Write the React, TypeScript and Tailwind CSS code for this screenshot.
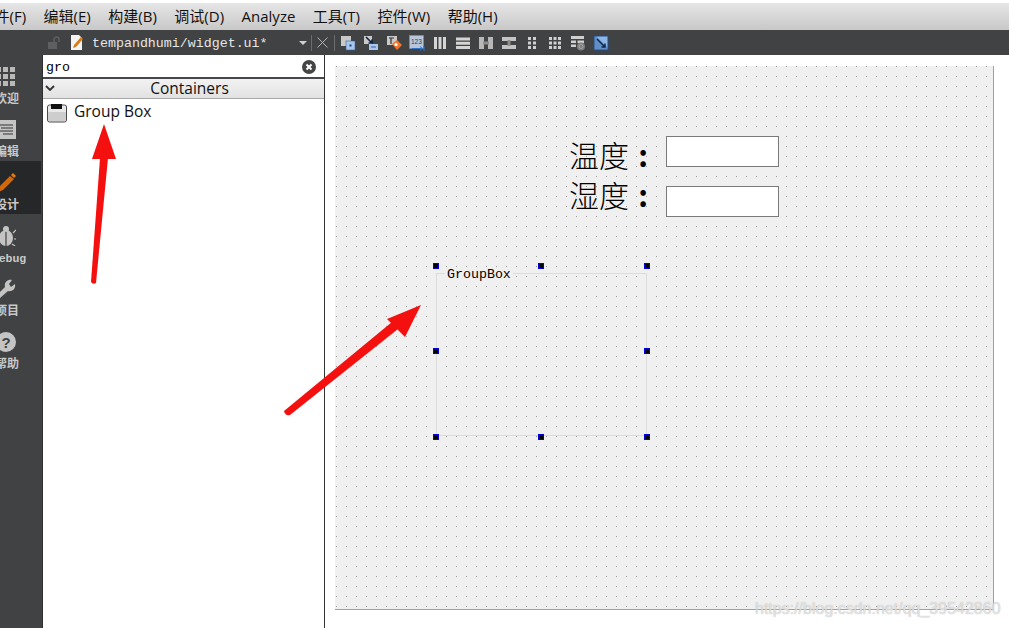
import type { ReactNode } from 'react'

const menus = ['文件(F)', '编辑(E)', '构建(B)', '调试(D)', 'Analyze', '工具(T)', '控件(W)', '帮助(H)']

const handles = [
  'left-[98px] top-[197px]',
  'left-[203px] top-[197px]',
  'left-[309px] top-[197px]',
  'left-[98px] top-[282px]',
  'left-[309px] top-[282px]',
  'left-[98px] top-[368px]',
  'left-[203px] top-[368px]',
  'left-[309px] top-[368px]',
]

function Tool({ children }: { children: ReactNode }) {
  return (
    <svg width="16" height="16" viewBox="0 0 16 16" className="shrink-0">
      {children}
    </svg>
  )
}

// designer toolbar, left to right
const tools: ReactNode[] = [
  <>
    <rect x="1" y="1" width="10" height="10" fill="#c9c9c9" />
    <rect x="6" y="6" width="9" height="9" fill="#a9c6ee" stroke="#3a5f9a" strokeWidth="0.6" />
    <rect x="9.5" y="9.5" width="2" height="2" fill="#1c3f7a" />
  </>,
  <>
    <rect x="1" y="1" width="8" height="8" fill="#c9c9c9" />
    <rect x="6" y="9" width="9" height="6" fill="#a9c6ee" />
    <path d="M3 2l6 6M9 4.500V8H5.500" stroke="#10223f" strokeWidth="1.600" fill="none" />
    <rect x="8" y="11.500" width="5" height="1" fill="#3a5f9a" />
  </>,
  <>
    <rect x="1" y="1" width="10" height="9" fill="#c9c9c9" />
    <path d="M3 3h5M5 3v6" stroke="#333" strokeWidth="1.200" />
    <path d="M6 9l5-4 5 5-5 5z" fill="#f0782c" />
    <circle cx="10" cy="9.500" r="1.600" fill="#fff" />
  </>,
  <>
    <rect x="0.500" y="0.500" width="14" height="13" fill="#b9c6da" stroke="#7b8fb0" strokeWidth="0.6" />
    <text x="2" y="9" fontSize="6.500" fontFamily="Liberation Sans" fill="#1f3f78">123</text>
    <path d="M3 13.500h10M11 11.500l2.500 2-2.500 2M15 11v5" stroke="#2f74c0" strokeWidth="1" fill="none" />
  </>,
  <path d="M2 2h3v12H2zM6.500 2h3v12h-3zM11 2h3v12h-3z" fill="#d4d4d4" />,
  <path d="M1 2.500h14v3H1zM1 6.800h14v3H1zM1 11h14v3H1z" fill="#d4d4d4" />,
  <>
    <path d="M1 2h5v12H1zM10 2h5v12h-5z" fill="#b8b8b8" />
    <path d="M5 8h6" stroke="#8e8e8e" strokeWidth="3" />
  </>,
  <>
    <path d="M1 2h14v4H1zM1 10h14v4H1z" fill="#c4c4c4" />
    <path d="M8 5v6" stroke="#8e8e8e" strokeWidth="3" />
  </>,
  <path d="M4 2h3v3H4zM9 2h3v3H9zM4 6.500h3v3H4zM9 6.500h3v3H9zM4 11h3v3H4zM9 11h3v3H9z" fill="#d0d0d0" />,
  <path d="M2 2h3v3H2zM6.500 2h3v3h-3zM11 2h3v3h-3zM2 6.500h3v3H2zM6.500 6.500h3v3h-3zM11 6.500h3v3h-3zM2 11h3v3H2zM6.500 11h3v3h-3zM11 11h3v3h-3z" fill="#d0d0d0" />,
  <>
    <path d="M1 1h13v3H1zM1 5.500h5v2.500H1zM7.500 5.500h6.500v2.500H7.500zM1 9.500h5V12H1z" fill="#cfcfcf" />
    <circle cx="11" cy="11.500" r="4" fill="#7d7d7d" />
    <circle cx="11" cy="11.500" r="2" fill="none" stroke="#a8a8a8" />
  </>,
  <>
    <rect x="1" y="1" width="14" height="14" fill="#8fb5e3" stroke="#1f4c86" />
    <path d="M3 1l12 12v2H1V1z" fill="#2b5f9e" opacity="0.45" />
    <path d="M4 4l8 8M12 8.500V12H8.500" stroke="#0b2a50" strokeWidth="1.500" fill="none" />
  </>,
]

function MenuBar() {
  return (
    <div className="h-[30px] shrink-0 pt-[3px] bg-white">
      <div className="h-[27px] flex items-center gap-[17.5px] -ml-[20.5px] bg-gradient-to-b from-[#e6e6e6] to-[#c8c8c8] text-[15px] text-[#111] [font-family:'Open_Sans','Noto_Sans_CJK_SC',sans-serif]">
        {menus.map((m) => (
          <span key={m} className="whitespace-nowrap">{m}</span>
        ))}
      </div>
    </div>
  )
}

function Toolbar() {
  return (
    <div className="h-[25px] shrink-0 flex items-center bg-[#404244]">
      <div className="w-[48px] shrink-0" />
      <svg width="13" height="14" viewBox="0 0 13 14" className="shrink-0">
        <rect x="0" y="6" width="9" height="7" fill="#5d5f61" />
        <path d="M6 6V3.500a2.500 2.500 0 0 1 5 0V6" stroke="#5d5f61" strokeWidth="1.500" fill="none" />
      </svg>
      <svg width="16" height="17" viewBox="0 0 16 17" className="ml-[8px] shrink-0">
        <path d="M2 1h8l3 3v12H2z" fill="#f4f4f4" />
        <path d="M4 14l1-3 7-8 2 2-7 8z" fill="#d97a16" />
      </svg>
      <span className="ml-[7px] pt-[3px] w-[207px] text-[13.300px] text-[#e6e6e6] whitespace-nowrap [font-family:'Liberation_Mono',monospace]">
        tempandhumi/widget.ui*
      </span>
      <div className="w-0 h-0 border-x-[4px] border-x-transparent border-t-[4px] border-t-[#d0d0d0]" />
      <div className="ml-[4px] w-px h-[16px] bg-[#6a6c6e]" />
      <svg width="11" height="11" viewBox="0 0 11 11" className="ml-[5px]">
        <path d="M0.500 0.500l10 10M10.500 0.500l-10 10" stroke="#b4b4b4" strokeWidth="1" />
      </svg>
      <div className="ml-[6px] w-px h-[16px] bg-[#6a6c6e]" />
      <div className="ml-[5px] flex items-center gap-[7px]">
        {tools.map((t, i) => (
          <Tool key={i}>{t}</Tool>
        ))}
      </div>
    </div>
  )
}

function NavItem({ label, active, mono, children }: { label: string; active?: boolean; mono?: boolean; children: ReactNode }) {
  return (
    <div className={`h-[53px] w-[70px] flex flex-col items-center pt-[11px] ${active ? 'bg-[#262729]' : ''}`}>
      <div className="h-[21px] flex items-center justify-center">{children}</div>
      <span
        className={`leading-[16px] font-bold text-[#c9c9c9] whitespace-nowrap ${
          mono
            ? "mt-[5px] ml-[6px] text-[11.500px] [font-family:'Liberation_Mono',monospace]"
            : "mt-[3px] ml-[2px] text-[12px] [font-family:'Noto_Sans_CJK_SC',sans-serif]"
        }`}
      >
        {label}
      </span>
    </div>
  )
}

function Sidebar() {
  return (
    <aside className="w-[43px] shrink-0 bg-[#404244] overflow-hidden border-r border-[#2e2f30]">
      <div className="-ml-[29px] w-[72px]">
        <NavItem label="欢迎">
          <svg width="20" height="20" viewBox="0 0 20 20">
            <path d="M0 0h5v5H0zM7 0h5v5H7zM14 0h5v5h-5zM0 7h5v5H0zM7 7h5v5H7zM14 7h5v5h-5zM0 14h5v5H0zM7 14h5v5H7zM14 14h5v5h-5z" fill="#b8b8b8" />
          </svg>
        </NavItem>
        <NavItem label="编辑">
          <svg width="20" height="19" viewBox="0 0 20 19">
            <rect x="0" y="0" width="20" height="19" fill="#c4c4c4" />
            <path d="M3 5h14M5 8h12M3 11h14M7 14h10" stroke="#333" strokeWidth="1.200" />
          </svg>
        </NavItem>
        <NavItem label="设计" active>
          <svg width="20" height="20" viewBox="0 0 20 20">
            <path d="M2 19l1-5L14 3l4 3L7 17z" fill="#d3680a" />
            <path d="M15 2l2-2 3 3-2 2z" fill="#e07a14" />
          </svg>
        </NavItem>
        <NavItem label="Debug" mono>
          <svg width="20" height="20" viewBox="0 0 20 20">
            <ellipse cx="10" cy="12" rx="7" ry="8" fill="#c4c4c4" />
            <path d="M10 4v16" stroke="#404244" strokeWidth="1.200" />
            <circle cx="10" cy="3" r="3" fill="#c4c4c4" />
            <path d="M3 7L0 4M17 7l3-3M2 13H0M18 13h2M4 18l-3 2M16 18l3 2" stroke="#c4c4c4" strokeWidth="1.200" />
          </svg>
        </NavItem>
        <NavItem label="项目">
          <svg width="20" height="20" viewBox="0 0 20 20">
            <path d="M0 17L9 8c-1-4 2-8 7-7l-3 4 2 3 4-3c1 5-3 8-7 7l-9 8z" fill="#c4c4c4" />
          </svg>
        </NavItem>
        <NavItem label="帮助">
          <svg width="20" height="20" viewBox="0 0 20 20">
            <circle cx="10" cy="10" r="10" fill="#c4c4c4" />
            <text x="10" y="15.500" textAnchor="middle" fontSize="15" fontWeight="700" fontFamily="Liberation Sans" fill="#404244">?</text>
          </svg>
        </NavItem>
      </div>
    </aside>
  )
}

function WidgetBox() {
  return (
    <section className="w-[282px] shrink-0 flex flex-col bg-white border-r border-[#333]">
      <div className="h-[24px] shrink-0 flex items-center justify-between pl-[3px] pr-[8px] border-b-2 border-[#45474a]">
        <span className="pt-[3px] text-[13.300px] text-black [font-family:'Liberation_Mono',monospace]">gro</span>
        <svg width="14" height="14" viewBox="0 0 14 14" className="mt-[1px]">
          <circle cx="7" cy="7" r="7" fill="#454545" />
          <path d="M4.500 4.500l5 5M9.500 4.500l-5 5" stroke="#fff" strokeWidth="2" />
        </svg>
      </div>
      <div className="relative h-[20px] shrink-0 flex items-center justify-center pl-[12px] pt-[1px] bg-gradient-to-b from-[#f2f2f2] to-[#e2e2e2] border-b border-[#a8a8a8] text-[15.500px] text-[#111] [font-family:'Open_Sans',sans-serif]">
        <svg width="10" height="6" viewBox="0 0 10 6" className="absolute left-[2px] top-[6px]">
          <path d="M1 1l4 4 4-4" stroke="#333" strokeWidth="1.800" fill="none" />
        </svg>
        Containers
      </div>
      <div className="flex items-center gap-[7px] pl-[4px] pt-[3px]">
        <svg width="20" height="20" viewBox="0 0 20 20">
          <rect x="0.500" y="2" width="19" height="17" rx="2" fill="#e8e8e8" stroke="#4a4a4a" />
          <rect x="1" y="9" width="18" height="9" rx="1" fill="#cdcdcd" />
          <rect x="4" y="1" width="11" height="5" fill="#111" />
        </svg>
        <span className="-mt-[2px] text-[15.500px] text-[#111] [font-family:'Open_Sans',sans-serif]">Group Box</span>
      </div>
    </section>
  )
}

function FormArea() {
  return (
    <main className="flex-1 pl-[10px] pt-[11px] bg-white">
      <div className="relative w-[659px] h-[544px] bg-[#f0f0f0] border-r border-b border-[#a0a0a0] bg-[radial-gradient(circle_at_1.5px_0.5px,#999999_0.75px,transparent_0.76px)] bg-[size:10px_10px]">
        <div className="absolute left-[234px] top-[73px] flex flex-col gap-[10px]">
          {['温度', '湿度'].map((label) => (
            <span key={label} className="h-[30px] leading-[30px] text-[30px] text-black whitespace-nowrap [font-family:'Noto_Sans_CJK_TC',sans-serif] font-light">
              {label}
              <span className="inline-block w-[28px] text-center font-bold">:</span>
            </span>
          ))}
        </div>
        <div className="absolute left-[331px] top-[70px] w-[113px] h-[31px] bg-white border border-[#7a7a7a]" />
        <div className="absolute left-[331px] top-[120px] w-[113px] h-[31px] bg-white border border-[#7a7a7a]" />

        <div className="absolute left-[101px] top-[207px] w-[211px] h-[163px] border border-[#dcdcdc]">
          <span className="absolute left-[8px] -top-[6px] px-[2px] h-[14px] leading-[14px] bg-[#f0f0f0] text-[13.300px] text-black [font-family:'Liberation_Mono',monospace]">
            GroupBox
          </span>
        </div>
        {handles.map((pos) => (
          <div key={pos} className={`absolute ${pos} w-[6px] h-[6px] bg-black border border-[#0000e0]`} />
        ))}
      </div>
    </main>
  )
}

export default function App() {
  return (
    <div className="relative w-[1009px] h-[628px] overflow-hidden flex flex-col bg-white">
      <MenuBar />
      <Toolbar />
      <div className="flex flex-1 min-h-0">
        <Sidebar />
        <WidgetBox />
        <FormArea />
      </div>

      {/* annotation arrows */}
      <svg width="1009" height="628" viewBox="0 0 1009 628" className="absolute left-0 top-0 pointer-events-none">
        <path d="M91 282L100 158h8L96 283q-3 2-5-1z" fill="#f51010" />
        <path d="M104 124L116 159H92z" fill="#f51010" />
        <path d="M284 411L392 322l6 7L290 415q-5 1-6-4z" fill="#f51010" />
        <path d="M421 305L405 337L387 319z" fill="#f51010" />
      </svg>

      <span className="absolute left-[755px] top-[597px] text-[16px] text-white/60 whitespace-nowrap [font-family:'Liberation_Sans',sans-serif] [text-shadow:0_0_1px_#a8a8a8]">
        https://blog.csdn.net/qq_39542860
      </span>
    </div>
  )
}
